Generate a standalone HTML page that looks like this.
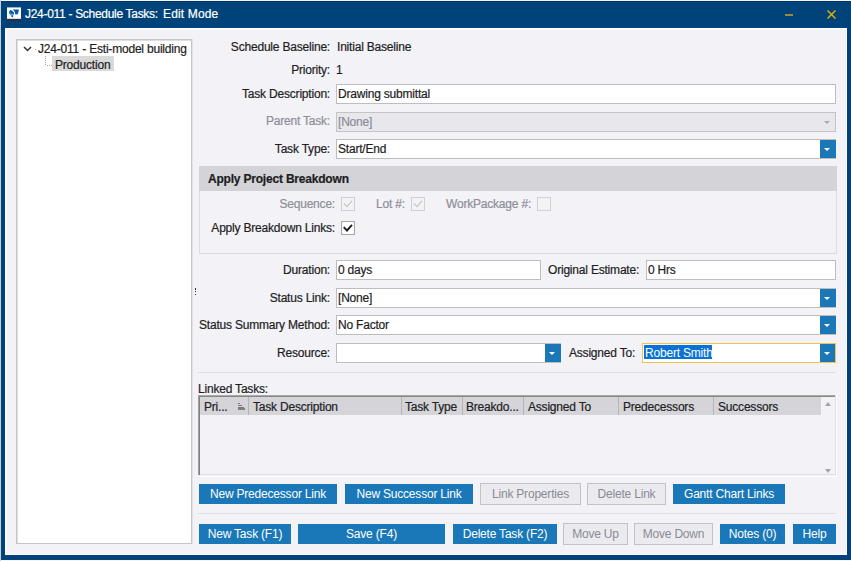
<!DOCTYPE html>
<html><head><meta charset="utf-8">
<style>
*{box-sizing:border-box;margin:0;padding:0}
html,body{width:851px;height:561px;overflow:hidden;background:#f4f4f6}
body{font-family:"Liberation Sans",sans-serif;font-size:12px;letter-spacing:-0.2px;color:#1e1e1e;position:relative;-webkit-text-stroke:0.2px currentColor}
.a{position:absolute}
#win{left:1px;top:1px;width:850px;height:559px;background:#00437a}
#client{left:5px;top:28px;width:842px;height:527px;background:#f2f2f7;border:1px solid #fff;box-shadow:inset 1px 1px 0 #f9f9fb}
.lbl{position:absolute;text-align:right;white-space:nowrap;line-height:14px}
.val{position:absolute;white-space:nowrap;line-height:14px}
.inp{position:absolute;background:#fff;border:1px solid #bdbdbd;height:20px;line-height:18px;padding-left:1px;white-space:nowrap}
.dis{background:#e8e8ec;color:#8c8c98;border-color:#c4c4c4}
.dd{position:absolute;right:-1px;top:0;width:16px;height:18px;background:#1a78b8}
.dd:after{content:"";position:absolute;left:4px;top:8px;border-left:3px solid transparent;border-right:3px solid transparent;border-top:3px solid #fff}
.btn{-webkit-text-stroke:0;position:absolute;top:484px;height:20px;background:#1a78b8;color:#fff;text-align:center;line-height:20px;white-space:nowrap}
.btn.off{top:483px;height:22px;background:#ebebef;border:1px solid #c2c2c2;color:#8a8a94;line-height:20px}
.r2{top:524px}
.btn.off.r2{top:523px}
.gray{color:#8e8e98}
.cb{position:absolute;width:14px;height:14px;border:1px solid #a4a4a4;background:#fff}
.cb.off{border-color:#d0d0d4;background:#f3f3f6}
.hd{position:absolute;top:398px;height:18px;line-height:18px;white-space:nowrap;color:#222}
.sep{position:absolute;top:397px;width:1px;height:18px;background:#b4b4b8}
</style></head><body>
<div class="a" style="left:0;top:0;width:1px;height:561px;background:#c5d0dc"></div>
<div class="a" id="win"></div>
<div class="a" style="left:1px;top:1px;width:850px;height:1px;background:#003470"></div>
<!-- title -->
<div class="a" style="left:7px;top:7px;width:14px;height:1px;background:#8fb0cf"></div>
<div class="a" style="left:7px;top:8px;width:14px;height:11px;background:#fff"></div>
<div class="a" style="left:7px;top:18px;width:14px;height:1px;background:#d8d4dc"></div>
<div class="a" style="left:7px;top:19px;width:14px;height:2px;background:#332c3c"></div>
<svg class="a" style="left:7px;top:7px" width="14" height="13" viewBox="0 0 14 13"><path d="M2.3 4.0 L3.3 3.0 L4.8 3.5 L7.0 5.6 L7.0 7.0 L2.2 6.8Z" fill="#0b5aa8"/><path d="M2.2 6.8 L7.0 7.0 L6.2 9.0 L5.2 10.0 L3.6 8.6Z" fill="#6d9fd2"/><circle cx="5.3" cy="9.3" r="0.9" fill="#0b5aa8"/><path d="M5.6 2.6 L11.9 2.4 L11.7 4.0 L10.8 7.3 L8.2 7.5 L8.0 5.3 L6.7 3.6Z" fill="#0b5aa8"/></svg>
<div class="a" style="left:25px;top:7px;color:#fff;font-size:12px;letter-spacing:-0.3px;line-height:15px;white-space:nowrap">J24-011 - Schedule Tasks:</div><div class="a" style="left:163px;top:7px;color:#fff;font-size:12px;letter-spacing:0.15px;line-height:15px;white-space:nowrap">Edit Mode</div>
<div class="a" style="left:785px;top:14px;width:8px;height:2px;background:#948d3c"></div>
<svg class="a" style="left:827px;top:10px" width="9" height="9" viewBox="0 0 9 9"><path d="M0.5 0.5 L8.5 8.5 M8.5 0.5 L0.5 8.5" stroke="#e4b800" stroke-width="1.4"/></svg>

<div class="a" id="client"></div>

<!-- tree -->
<div class="a" style="left:16px;top:39px;width:176px;height:505px;background:#fff;border:1px solid #c6c6c6;border-width:1px 1px 1px 1px;box-shadow:inset 1px 1px 0 #dedede"></div>
<div class="a" style="left:192px;top:39px;width:1px;height:505px;background:#e2e2e6"></div>
<svg class="a" style="left:23px;top:46px" width="9" height="6" viewBox="0 0 9 6"><path d="M1 1 L4.5 4.5 L8 1" stroke="#333" stroke-width="1.5" fill="none"/></svg>
<div class="a" style="left:35px;top:49px;width:1px;height:1px;background:#a8a8a8"></div>
<div class="val" style="left:38px;top:42px">J24-011 - Esti-model building</div>
<svg class="a" style="left:45px;top:56px" width="8" height="10"><path d="M0 0h1v1h-1zM0 2h1v1h-1zM0 4h1v1h-1zM0 6h1v1h-1zM0 8h1v1h-1zM2 9h1v1h-1zM4 9h1v1h-1zM6 9h1v1h-1z" fill="#a8a8a8"/></svg>
<div class="a" style="left:52px;top:56px;width:62px;height:15px;background:#d9d9d9"></div>
<div class="val" style="left:55px;top:58px">Production</div>

<!-- form -->
<div class="lbl" style="right:521px;top:40px">Schedule Baseline:</div>
<div class="val" style="left:337px;top:40px">Initial Baseline</div>
<div class="lbl" style="right:521px;top:63px">Priority:</div>
<div class="val" style="left:336px;top:63px">1</div>
<div class="lbl" style="right:521px;top:87px">Task Description:</div>
<div class="inp" style="left:336px;top:84px;width:500px">Drawing submittal</div>
<div class="lbl gray" style="right:521px;top:114px">Parent Task:</div>
<div class="inp dis" style="left:336px;top:112px;width:500px">[None]<svg class="a" style="right:5px;top:8px" width="6" height="3"><path d="M0 0 L6 0 L3 3Z" fill="#a8a8a8"/></svg></div>
<div class="lbl" style="right:521px;top:142px">Task Type:</div>
<div class="inp" style="left:336px;top:139px;width:500px">Start/End<div class="dd"></div></div>

<!-- group -->
<div class="a" style="left:199px;top:166px;width:638px;height:88px;border:1px solid #dcdce0;border-top:none"></div>
<div class="a" style="left:199px;top:166px;width:638px;height:25px;background:#d3d3d8"></div>
<div class="a" style="left:208px;top:172px;font-weight:bold;font-size:12px;letter-spacing:-0.2px;line-height:14px;white-space:nowrap">Apply Project Breakdown</div>
<div class="lbl gray" style="right:516px;top:197px">Sequence:</div>
<div class="cb off" style="left:341px;top:197px"><svg class="a" style="left:0;top:0" width="12" height="12" viewBox="0 0 12 12"><path d="M1.8 5.4 L5 8.6 L10 2.8" stroke="#c4c4c8" stroke-width="1.3" fill="none"/></svg></div>
<div class="lbl gray" style="left:376px;top:197px">Lot #:</div>
<div class="cb off" style="left:411px;top:197px"><svg class="a" style="left:0;top:0" width="12" height="12" viewBox="0 0 12 12"><path d="M1.8 5.4 L5 8.6 L10 2.8" stroke="#c4c4c8" stroke-width="1.3" fill="none"/></svg></div>
<div class="lbl gray" style="left:446px;top:197px">WorkPackage #:</div>
<div class="cb off" style="left:537px;top:197px"></div>
<div class="lbl" style="right:516px;top:221px">Apply Breakdown Links:</div>
<div class="cb" style="left:341px;top:221px"><svg class="a" style="left:0;top:0" width="12" height="12" viewBox="0 0 12 12"><path d="M1.7 5.2 L5 8.5 L10 2.8" stroke="#1e1e1e" stroke-width="1.9" fill="none"/></svg></div>

<div class="lbl" style="right:521px;top:263px">Duration:</div>
<div class="inp" style="left:336px;top:260px;width:205px">0 days</div>
<div class="lbl" style="left:548px;top:263px">Original Estimate:</div>
<div class="inp" style="left:646px;top:260px;width:190px">0 Hrs</div>
<div class="lbl" style="right:521px;top:291px">Status Link:</div>
<div class="inp" style="left:336px;top:288px;width:500px">[None]<div class="dd"></div></div>
<div class="lbl" style="right:521px;top:318px">Status Summary Method:</div>
<div class="inp" style="left:336px;top:315px;width:500px">No Factor<div class="dd"></div></div>
<div class="lbl" style="right:521px;top:346px">Resource:</div>
<div class="inp" style="left:336px;top:343px;width:225px"><div class="dd"></div></div>
<div class="lbl" style="left:569px;top:346px">Assigned To:</div>
<div class="inp" style="left:642px;top:343px;width:194px;border-color:#f3c24a"><div class="a" style="left:1px;top:1px;width:68px;height:14px;background:#0a72d4"></div><div class="a" style="left:2px;top:0;color:#fff;-webkit-text-stroke:0">Robert Smith</div><div class="dd" style="right:0;width:15px"></div></div>

<div class="a" style="left:198px;top:372px;width:638px;height:1px;background:#dedee2"></div>
<div class="val" style="left:198px;top:382px">Linked Tasks:</div>
<div class="a" style="left:198px;top:395px;width:639px;height:82px;border:1px solid #fff;border-width:0 1px 1px 0"></div>
<div class="a" style="left:198px;top:395px;width:638px;height:80px;background:#f3f3f7;border:1px solid #e0e0e4;border-width:0 1px 1px 0"></div>
<div class="a" style="left:198px;top:395px;width:637px;height:1px;background:#a8a8a8"></div><div class="a" style="left:198px;top:396px;width:637px;height:1px;background:#888"></div>
<div class="a" style="left:198px;top:395px;width:1px;height:80px;background:#a0a0a0"></div><div class="a" style="left:199px;top:396px;width:1px;height:79px;background:#808080"></div>
<div class="a" style="left:200px;top:397px;width:621px;height:18px;background:#d4d4d9"></div>
<div class="hd" style="left:204px">Pri...</div>
<svg class="a" style="left:238px;top:403px" width="8" height="7" viewBox="0 0 8 7"><rect x="0" y="0" width="2" height="1" fill="#7a7a7a"/><rect x="0" y="2" width="4" height="1" fill="#7a7a7a"/><rect x="0" y="4" width="6" height="1" fill="#7a7a7a"/><rect x="0" y="5" width="7" height="2" fill="#808080"/></svg>
<div class="sep" style="left:248px"></div>
<div class="hd" style="left:253px">Task Description</div>
<div class="sep" style="left:401px"></div>
<div class="hd" style="left:405px">Task Type</div>
<div class="sep" style="left:462px"></div>
<div class="hd" style="left:466px">Breakdo...</div>
<div class="sep" style="left:523px"></div>
<div class="hd" style="left:528px">Assigned To</div>
<div class="sep" style="left:618px"></div>
<div class="hd" style="left:623px">Predecessors</div>
<div class="sep" style="left:713px"></div>
<div class="hd" style="left:718px">Successors</div>
<svg class="a" style="left:825px;top:402px" width="6" height="4" viewBox="0 0 6 4"><path d="M0 4 L6 4 L3 0Z" fill="#a4a4a8"/></svg>
<svg class="a" style="left:825px;top:469px" width="6" height="4" viewBox="0 0 6 4"><path d="M0 0 L6 0 L3 4Z" fill="#a4a4a8"/></svg>

<div class="btn" style="left:199px;width:138px">New Predecessor Link</div>
<div class="btn" style="left:345px;width:128px">New Successor Link</div>
<div class="btn off" style="left:480px;width:101px">Link Properties</div>
<div class="btn off" style="left:587px;width:79px">Delete Link</div>
<div class="btn" style="left:673px;width:112px">Gantt Chart Links</div>

<div class="a" style="left:198px;top:513px;width:638px;height:1px;background:#dedee2"></div>

<div class="btn r2" style="left:199px;width:92px">New Task (F1)</div>
<div class="btn r2" style="left:298px;width:147px">Save (F4)</div>
<div class="btn r2" style="left:453px;width:104px">Delete Task (F2)</div>
<div class="btn off r2" style="left:563px;width:65px">Move Up</div>
<div class="btn off r2" style="left:634px;width:79px">Move Down</div>
<div class="btn r2" style="left:720px;width:65px">Notes (0)</div>
<div class="btn r2" style="left:793px;width:43px">Help</div>
<div class="a" style="left:195px;top:288px;width:1px;height:2px;background:#333"></div>
<div class="a" style="left:195px;top:291px;width:1px;height:1px;background:#333"></div>
<div class="a" style="left:195px;top:294px;width:1px;height:1px;background:#333"></div>
</body></html>
